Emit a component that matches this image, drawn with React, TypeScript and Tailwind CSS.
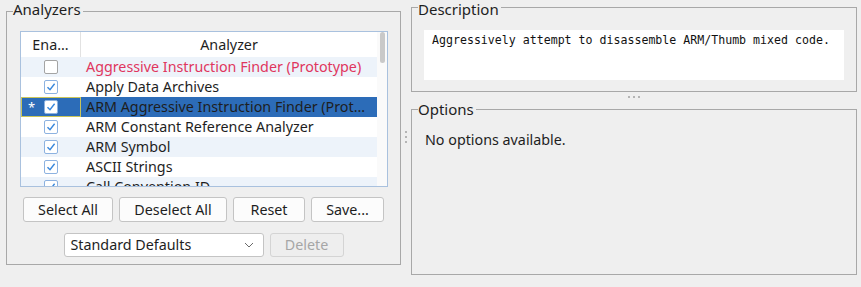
import React from "react";

type Row = { name: string; checked: boolean; red?: boolean; selected?: boolean };

const rows: Row[] = [
  { name: "Aggressive Instruction Finder (Prototype)", checked: false, red: true },
  { name: "Apply Data Archives", checked: true },
  { name: "ARM Aggressive Instruction Finder (Prot...", checked: true, selected: true },
  { name: "ARM Constant Reference Analyzer", checked: true },
  { name: "ARM Symbol", checked: true },
  { name: "ASCII Strings", checked: true },
  { name: "Call Convention ID", checked: true },
];

function Check({ checked }: { checked: boolean }) {
  return (
    <div
      className={
        "w-[14px] h-[14px] rounded-[2px] bg-white border flex items-center justify-center " +
        (checked ? "border-[#8db2e0]" : "border-[#a4a4a4]")
      }
    >
      {checked && (
        <svg width="10" height="10" viewBox="0 0 10 10">
          <polyline points="1.5,5.2 4,7.8 8.6,1.8" fill="none" stroke="#3a88dc" strokeWidth="1.4" />
        </svg>
      )}
    </div>
  );
}

function Btn({ w, children, disabled }: { w: string; children: React.ReactNode; disabled?: boolean }) {
  return (
    <div
      className={
        "h-[25px] flex items-center justify-center rounded-[3px] border " +
        w +
        (disabled ? " bg-[#eeeeee] border-[#d4d4d4] text-[#a6a6a6]" : " bg-[#fcfcfc] border-[#c4c4c4] text-[#1e1e1e]")
      }
    >
      {children}
    </div>
  );
}

export default function App() {
  return (
    <div className="w-[861px] h-[287px] bg-[#efefef] flex font-['Noto_Sans',sans-serif] text-[14.3px] text-[#1e1e1e] overflow-hidden">
      {/* Left group */}
      <fieldset className="ml-[6px] w-[395px] h-[265px] border border-[#a8a8a8] min-w-0 flex flex-col">
        <legend className="ml-[6px] pr-[2px] pb-[4px] text-[15px] leading-[18px]">Analyzers</legend>
        <div className="mt-[9px] ml-[13px] w-[368px] h-[156px] border border-[#a9c1de] bg-white flex overflow-hidden">
          <div className="w-[357px] flex flex-col overflow-hidden">
            <div className="h-[25px] flex shrink-0 bg-white">
              <div className="w-[60px] border-r border-[#e2e2e2] flex items-center justify-center">Ena...</div>
              <div className="flex-1 flex items-center justify-center">Analyzer</div>
            </div>
            {rows.map((r, i) => (
              <div
                key={r.name}
                className={
                  "h-[20px] shrink-0 flex " +
                  (r.selected ? "bg-[#2c6cb8]" : i % 2 === 0 ? "bg-[#edf3fa]" : "bg-white")
                }
              >
                <div
                  className={
                    "relative w-[60px] shrink-0 flex items-center justify-center " +
                    (r.selected ? "border border-[#c9c55a]" : "")
                  }
                >
                  {r.selected && (
                    <span className="absolute left-[6px] top-[0px] text-white text-[13px] leading-[18px]">*</span>
                  )}
                  <Check checked={r.checked} />
                </div>
                <div
                  className={
                    "flex-1 min-w-0 pl-[5px] leading-[20px] whitespace-nowrap overflow-hidden " +
                    (r.red ? "text-[#e0365e]" : "text-[#1e1e1e]")
                  }
                >
                  {r.name}
                </div>
              </div>
            ))}
          </div>
          <div className="w-[10px] flex justify-center bg-[#fafafa]">
            <div className="w-[5px] h-[31px] rounded-full bg-[#c9c9c9]" />
          </div>
        </div>
        <div className="mt-[10px] flex justify-center gap-[6px]">
          <Btn w="w-[90px]">Select All</Btn>
          <Btn w="w-[108px]">Deselect All</Btn>
          <Btn w="w-[72px]">Reset</Btn>
          <Btn w="w-[73px]">Save...</Btn>
        </div>
        <div className="mt-[11px] flex justify-center gap-[6px]">
          <div className="w-[200px] h-[24px] bg-white border border-[#c4c4c4] rounded-[3px] flex items-center pl-[6px] pr-[9px]">
            <span className="flex-1">Standard Defaults</span>
            <svg width="10" height="6" viewBox="0 0 10 6">
              <polyline points="1,1 5,5 9,1" fill="none" stroke="#6a6a6a" strokeWidth="1" />
            </svg>
          </div>
          <Btn w="w-[74px] !h-[24px]" disabled>
            Delete
          </Btn>
        </div>
      </fieldset>

      {/* Vertical splitter */}
      <div className="w-[10px] flex flex-col items-center pt-[131px] gap-[3px]">
        <div className="w-[2px] h-[2px] bg-[#b4b4b4]" />
        <div className="w-[2px] h-[2px] bg-[#b4b4b4]" />
        <div className="w-[2px] h-[2px] bg-[#b4b4b4]" />
      </div>

      {/* Right column */}
      <div className="w-[446px] flex flex-col">
        <fieldset className="w-[446px] h-[92px] border border-[#a8a8a8] min-w-0 flex flex-col">
          <legend className="ml-[6px] pr-[2px] h-[14px] text-[15px] leading-[18px]">Description</legend>
          <div className="mt-[16px] ml-[12px] w-[420px] h-[50px] bg-white pl-[8px] pt-[3px] font-['DejaVu_Sans_Mono',monospace] text-[11.6px] leading-[14px] text-[#111]">
            Aggressively attempt to disassemble ARM/Thumb mixed code.
          </div>
        </fieldset>
        <div className="h-[8px] flex justify-center items-start pt-[4px] gap-[3px]">
          <div className="w-[2px] h-[2px] bg-[#b4b4b4]" />
          <div className="w-[2px] h-[2px] bg-[#b4b4b4]" />
          <div className="w-[2px] h-[2px] bg-[#b4b4b4]" />
        </div>
        <fieldset className="w-[446px] h-[175px] border border-[#a8a8a8] min-w-0 flex flex-col">
          <legend className="ml-[6px] pr-[2px] text-[15px] leading-[18px]">Options</legend>
          <div className="mt-[12px] ml-[13px] leading-[20px]">No options available.</div>
        </fieldset>
      </div>
    </div>
  );
}
